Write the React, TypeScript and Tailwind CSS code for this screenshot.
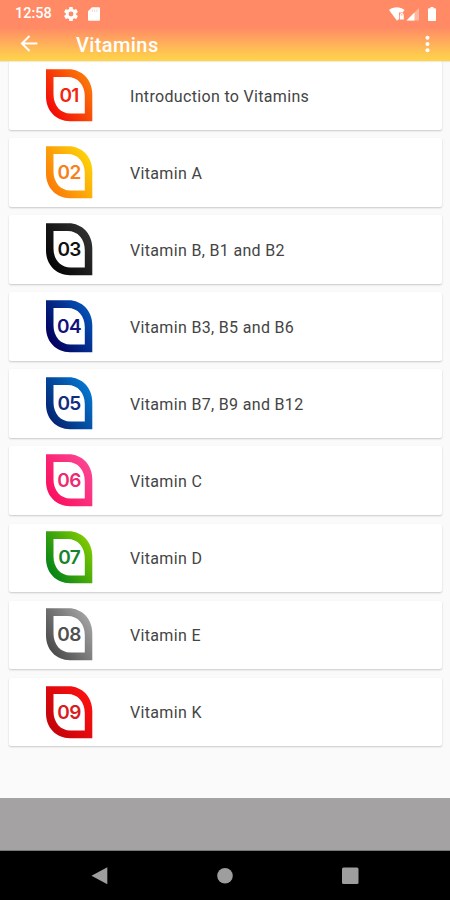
import React from 'react';

interface Topic {
  num: string;
  title: string;
  from: string;
  to: string;
  text: string;
}

const topics: Topic[] = [
  { num: '01', title: 'Introduction to Vitamins', from: '#f40a08', to: '#fb7808', text: '#f42410' },
  { num: '02', title: 'Vitamin A', from: '#fb7c08', to: '#fdd00a', text: '#f88018' },
  { num: '03', title: 'Vitamin B, B1 and B2', from: '#050505', to: '#303030', text: '#111111' },
  { num: '04', title: 'Vitamin B3, B5 and B6', from: '#03005c', to: '#0450b4', text: '#14107c' },
  { num: '05', title: 'Vitamin B7, B9 and B12', from: '#042474', to: '#0474cc', text: '#122c80' },
  { num: '06', title: 'Vitamin C', from: '#fa1060', to: '#fb4490', text: '#ee2a70' },
  { num: '07', title: 'Vitamin D', from: '#058418', to: '#7cc800', text: '#168428' },
  { num: '08', title: 'Vitamin E', from: '#4c4c4c', to: '#a0a0a0', text: '#505050' },
  { num: '09', title: 'Vitamin K', from: '#c4040a', to: '#fb1010', text: '#d81c20' },
];

const Badge: React.FC<{ topic: Topic }> = ({ topic }) => (
  <svg width="47" height="53" viewBox="0 0 47 53" className="shrink-0">
    <defs>
      <linearGradient id={`badge-${topic.num}`} x1="0.1" y1="0.8" x2="0.9" y2="0.2">
        <stop offset="0" stopColor={topic.from} />
        <stop offset="1" stopColor={topic.to} />
      </linearGradient>
    </defs>
    <path
      fill={`url(#badge-${topic.num})`}
      fillRule="evenodd"
      d="M0 .3H22.500C36 .3 46.300 11 46.300 25V52.200H24C10 52.200 0 41.500 0 27.500ZM7.500 8V25.500C7.500 36.500 14.500 44.500 24.500 44.500H38.800V27C38.800 16 32 8 21.500 8Z"
    />
    <text
      x="23.100"
      y="33.300"
      textAnchor="middle"
      fill={topic.text}
      className="font-['Inter',sans-serif] text-[19px] font-semibold tracking-[-0.6px]"
    >
      {topic.num}
    </text>
  </svg>
);

const StatusBar: React.FC = () => (
  <div className="flex h-[27px] items-center pl-[15px] pr-[14px] text-white">
    <span className="w-[49px] pt-[2px] text-[14.5px] font-medium leading-none">12:58</span>
    <svg width="14" height="14" viewBox="2 2 20 20" fill="currentColor">
      <path d="M19.400 13a7.500 7.500 0 0 0 0-2l2.100-1.650a.5.5 0 0 0 .1-.64l-2-3.460a.5.5 0 0 0-.6-.22l-2.500 1a7.300 7.300 0 0 0-1.700-.98l-.38-2.650A.5.5 0 0 0 14 2h-4a.5.5 0 0 0-.5.42l-.38 2.650c-.6.25-1.170.59-1.690.98l-2.490-1a.5.5 0 0 0-.61.22l-2 3.460a.5.5 0 0 0 .12.64L4.600 11a7.500 7.500 0 0 0 0 2l-2.150 1.650a.5.5 0 0 0-.12.64l2 3.460c.12.22.39.3.61.22l2.490-1c.52.4 1.080.73 1.690.98l.38 2.650c.03.24.24.42.5.42h4c.25 0 .46-.18.5-.42l.38-2.650c.6-.25 1.170-.59 1.690-.98l2.490 1c.23.09.49 0 .61-.22l2-3.460a.5.5 0 0 0-.12-.64ZM12 15.500a3.500 3.500 0 1 1 0-7 3.500 3.500 0 0 1 0 7Z" />
    </svg>
    <svg width="12" height="14" viewBox="0 0 12 14" className="ml-[10px]">
      <path fill="white" d="M4 .3H11a1 1 0 0 1 1 1V12.700a1 1 0 0 1-1 1H1a1 1 0 0 1-1-1V4.300Z" />
      <path stroke="#ffd5c8" strokeWidth="1" d="M4.500 2.500V5M6.700 2.500V5M8.900 2.500V5" />
    </svg>
    <div className="ml-auto flex items-center">
      <svg width="17" height="14" viewBox="0 0 17 14">
        <path fill="white" d="M0 3C4.500-.8 11-.8 15.500 3L13.700 5.500H10V12L8 13.800Z" />
        <path fill="none" stroke="white" strokeWidth="1.300" d="M11.500 8.500V8a1.300 1.300 0 0 1 2.600 0v.5" />
        <path fill="white" d="M10.800 8.300h4v4.200h-4Z" />
      </svg>
      <svg width="13" height="13" viewBox="0 0 13 13" className="mt-px">
        <path fill="white" fillOpacity=".38" d="M13 0V12.500H.5Z" />
        <path fill="white" d="M8.500 4.500V12.500H.5Z" />
      </svg>
      <svg width="8" height="14" viewBox="0 0 8 14" className="ml-[9px]">
        <path fill="white" d="M2.500 0h3v1.300H7a1 1 0 0 1 1 1V13a1 1 0 0 1-1 1H1a1 1 0 0 1-1-1V2.300a1 1 0 0 1 1-1h1.500Z" />
      </svg>
    </div>
  </div>
);

const Toolbar: React.FC = () => (
  <div className="flex h-[34px] items-center pl-[20px] pr-[20px] text-white">
    <svg width="18" height="18" viewBox="0 0 18 18" fill="none" stroke="white" strokeWidth="2">
      <path d="M17.300 8.500H2.500M9.500 1L2 8.500l7.500 7.500" />
    </svg>
    <h1 className="ml-[38px] pt-px text-[20px] font-medium leading-none tracking-[0.4px]">Vitamins</h1>
    <svg width="5" height="18" viewBox="0 0 5 18" fill="white" className="ml-auto">
      <circle cx="2.500" cy="2.700" r="2" />
      <circle cx="2.500" cy="9" r="2" />
      <circle cx="2.500" cy="15.200" r="2" />
    </svg>
  </div>
);

const App: React.FC = () => {
  return (
    <div className="flex h-[900px] w-[450px] flex-col overflow-hidden bg-[#fafafa] font-['Roboto',sans-serif]">
      <header className="relative z-10 h-[61px] shrink-0 bg-linear-to-b from-[#ff8a65] from-[45%] to-[#ffd249] to-[97%] shadow-[0_1px_1px_rgba(0,0,0,0.08)]">
        <StatusBar />
        <Toolbar />
      </header>

      {/* Topic list */}
      <main className="flex flex-1 flex-col gap-[8.500px] pl-[9px] pr-[8px]">
        {topics.map((topic, idx) => (
          <div
            key={topic.num}
            className={`flex h-[68.600px] shrink-0 items-center bg-white pl-[37px] shadow-[0_1px_2px_rgba(0,0,0,0.2)] ${
              idx === 0 ? 'rounded-b-[2px]' : 'rounded-[2px]'
            }`}
          >
            <Badge topic={topic} />
            <span className="ml-[37px] pt-[2.600px] text-[16px] tracking-[0.33px] text-[#444444]">{topic.title}</span>
          </div>
        ))}
      </main>

      {/* Ad banner slot */}
      <div className="h-[53px] shrink-0 border-b border-[#777777] bg-[#a4a2a2]" />

      <nav className="flex h-[49px] shrink-0 items-center bg-black pl-[91px] pr-[91px]">
        <svg width="268" height="18" viewBox="0 0 268 18" fill="#9e9e9e">
          <path d="M.5 8.700L16.300 .2V17.200Z" />
          <circle cx="134" cy="8.700" r="7.800" />
          <rect x="251" y=".5" width="16.500" height="16.500" rx="1.500" />
        </svg>
      </nav>
    </div>
  );
};

export default App;
